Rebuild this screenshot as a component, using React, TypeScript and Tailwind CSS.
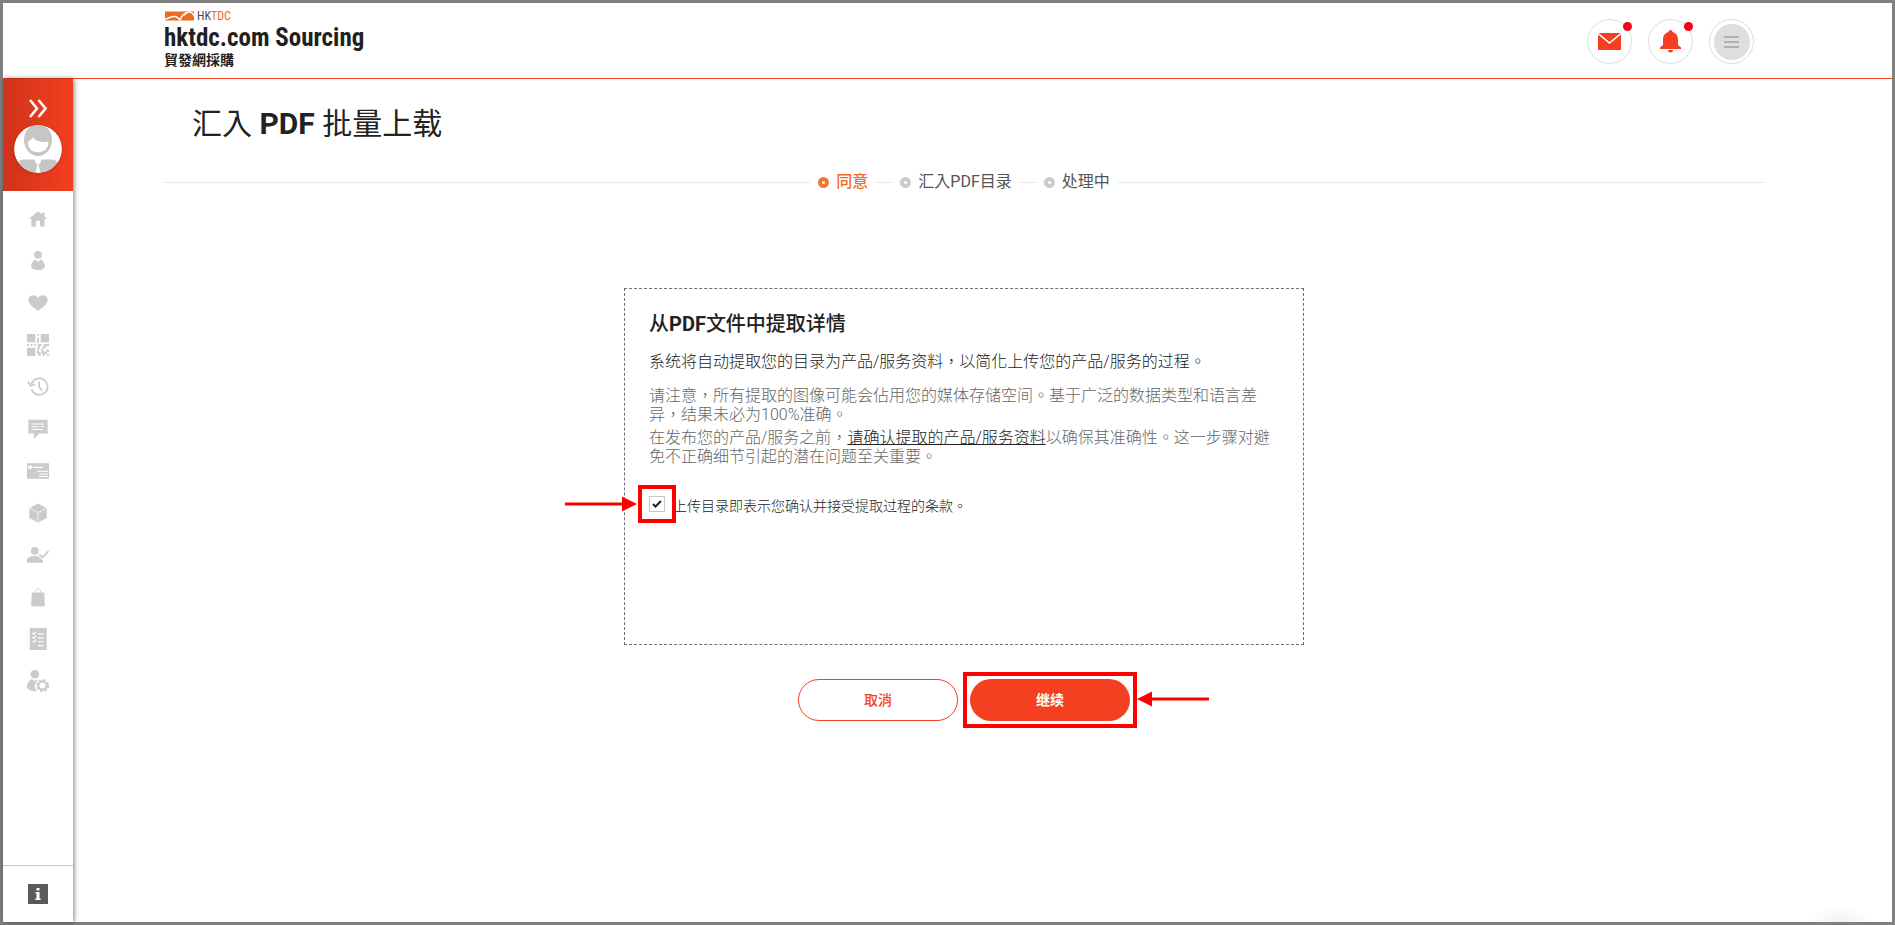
import { useState } from "react";
import type { ReactNode } from "react";
import clsx from "clsx";

interface NavItem {
  label: string;
  icon: ReactNode;
}

const navItems: NavItem[] = [
  {
    label: "主页",
    icon: (
      <path d="M12 3.5 2 12h2.8v8.2h5v-6.4h4.4v6.4h5V12H22l-3-2.6V5h-2.6v2.2z" />
    ),
  },
  {
    label: "帐户",
    icon: (
      <>
        <circle cx="12" cy="5.2" r="4.2" />
        <path d="M9 10c-2.800 2-4.500 4.600-4.500 7.500 0 2.900 3.300 4.500 7.500 4.500s7.500-1.600 7.500-4.500c0-2.900-1.700-5.500-4.500-7.500L12 13z" />
      </>
    ),
  },
  {
    label: "收藏",
    icon: (
      <path d="M12 20.800C6 16.300 1.500 13 1.500 8.800 1.500 5.500 4 3.600 6.800 3.600c2.200 0 4 1 5.200 2.900 1.200-1.900 3-2.900 5.200-2.900 2.800 0 5.300 1.900 5.300 5.200 0 4.200-4.500 7.500-10.500 12z" />
    ),
  },
  {
    label: "二维码",
    icon: (
      <path d="M0 0h9v9H0zM15 0h9v9h-9zM0 15h9v9H0zM11 0h2v2h-2zM11 4h2v6h-2zM0 11h2v2H0zM4 11h2v2H4zM8 11h2v2H8zM12 11h4v2h-2v3h-2zM18 11h6v2h-3v2h-2zM11 15h2v5h2v4h-2v-2h-2zM15 16h2v2h-2zM17 13h2v3h-2zM16 18h3v2h2v-3h3v3h-2v2h-3v2h-2v-3h-1zM22 22h2v2h-2z" />
    ),
  },
  {
    label: "历史",
    icon: (
      <>
        <path
          d="M5 14.500a9 9 0 1 0 1-8L4.800 9"
          fill="none"
          stroke="currentColor"
          strokeWidth="2"
        />
        <path d="m.5 6.500 3 5.500 6-2.500-1-1.300-4 1.400-2.700-4z" />
        <path
          d="M13.200 6v6l3.500 4"
          fill="none"
          stroke="currentColor"
          strokeWidth="2"
        />
      </>
    ),
  },
  {
    label: "讯息",
    icon: (
      <>
        <path d="M1.500 2h21v15h-9L7.500 22.500V17h-6z" />
        <path
          d="M5 6.500h14M5 9.500h8M15 9.500h4M5 12.500h12"
          stroke="#fff"
          strokeWidth="1.200"
        />
      </>
    ),
  },
  {
    label: "名片",
    icon: (
      <>
        <path d="M0 3.500h24v17H0z" />
        <circle cx="3.500" cy="8" r="2.200" fill="#fff" />
        <path
          d="M7 8h10.500M11 12.300h12M13 15.200h10M13 18h10"
          stroke="#fff"
          strokeWidth="1.200"
        />
      </>
    ),
  },
  {
    label: "产品",
    icon: (
      <>
        <path d="m12 1.500 9.500 5v11L12 22.500l-9.500-5v-11z" />
        <path
          d="m2.500 6.500 9.500 5 9.500-5M12 11.500v11"
          fill="none"
          stroke="#fff"
          strokeWidth="0.800"
        />
      </>
    ),
  },
  {
    label: "已认证买家",
    icon: (
      <>
        <circle cx="8.500" cy="7.500" r="4.200" />
        <path d="M0 20.500v-3c0-2.800 4-4.300 8.700-4.300s8.700 1.500 8.700 4.300v3z" />
        <path
          d="m13.500 11.500 3.500 3.300 6.500-7"
          fill="none"
          stroke="#fff"
          strokeWidth="4"
        />
        <path
          d="m13.500 11.500 3.500 3.300 6.500-7"
          fill="none"
          stroke="currentColor"
          strokeWidth="2"
        />
      </>
    ),
  },
  {
    label: "订单",
    icon: (
      <>
        <path d="M5.300 7h13.400l.8 15H4.500z" />
        <path
          d="M9 7.500V6c0-1.500 1.300-2.800 3-2.800s3 1.300 3 2.800v1.500"
          fill="none"
          stroke="currentColor"
          strokeWidth="1"
        />
      </>
    ),
  },
  {
    label: "清单",
    icon: (
      <>
        <path d="M3 0h18.500v24H3z" />
        <path
          d="m6 5.500 1.300 1.300L10 4.300M6 9.800l1.300 1.300L10 8.600M6 14l1.300 1.300L10 12.800M12 6.500h6M12 10.800h6M12 15h6M12 19.300h6"
          fill="none"
          stroke="#fff"
          strokeWidth="1.300"
        />
      </>
    ),
  },
  {
    label: "帐户设定",
    icon: (
      <>
        <circle cx="8.500" cy="4.700" r="4.700" />
        <path d="M5.500 9.800c-3.500 2-5.500 4.700-5.500 8C0 21 3.500 23.500 11 23.500c-1.800-1.800-2.500-3.700-2.500-6 0-2.200 1-4.200 3-5.500l-.5-2-2.500 2z" />
        <circle
          cx="17"
          cy="17"
          r="4.500"
          fill="none"
          stroke="currentColor"
          strokeWidth="2.400"
        />
        <circle
          cx="17"
          cy="17"
          r="6.200"
          fill="none"
          stroke="currentColor"
          strokeWidth="2"
          strokeDasharray="2.500 2.369"
        />
      </>
    ),
  },
];

const steps = ["同意", "汇入PDF目录", "处理中"];

function Logo() {
  return (
    <a href="#" className="flex flex-col text-[#231f20]">
      <span className="flex h-3 items-center gap-0.5">
        <svg width="31" height="10" viewBox="0 0 31 10" aria-hidden="true">
          <path d="M1 0.500h29v9H1z" fill="#e96d1f" />
          <path
            d="M0 9C5 6.500 8 4.800 11 5.500c2.500.5 3.500 2 5 3.300C18 4 21 1.500 25 1c2-.2 4 1 6 5.500"
            fill="none"
            stroke="#fff"
            strokeWidth="1.500"
          />
          <path d="M24 1.200c-2 1.500-2 2.500-4 3.300" stroke="#fff" fill="none" />
        </svg>
        <span className="font-['Roboto_Condensed',Roboto,sans-serif] text-[12px] leading-3 text-[#414a52]">
          HK<span className="text-[#e96d1f]">TDC</span>
        </span>
      </span>
      <span className="font-['Roboto_Condensed',Roboto,sans-serif] text-[25px] leading-8 font-bold">
        hktdc.com Sourcing
      </span>
      <span className="text-[14px] leading-3 font-bold">貿發網採購</span>
    </a>
  );
}

function Header() {
  return (
    <header className="flex h-[76px] items-start justify-between border-b border-[#f43f20] pt-[7px] pr-[138px] pl-[161px]">
      <Logo />
      <div className="flex gap-4 pt-[9px]">
        <button
          aria-label="讯息"
          className="relative flex size-[45px] items-center justify-center rounded-full border border-[#dcdcdc]"
        >
          <svg width="23" height="17" viewBox="0 0 23 17" aria-hidden="true">
            <path d="M0 0h23v17H0z" fill="#f43f20" />
            <path
              d="m0 .5 11.500 9.500L23 .5"
              fill="none"
              stroke="#fff"
              strokeWidth="1.600"
            />
          </svg>
          <span className="absolute top-[2px] -right-px size-[9px] rounded-full bg-[#f5001d]"></span>
        </button>
        <button
          aria-label="通知"
          className="relative flex size-[45px] items-center justify-center rounded-full border border-[#dcdcdc]"
        >
          <svg
            width="21"
            height="23"
            viewBox="0 0 21 23"
            fill="#f43f20"
            aria-hidden="true"
          >
            <path d="M10.500 0a2 2 0 0 1 2 2c3.500 1 5.500 4 5.500 7.500V15l3 2.500V19H0v-1.500L3 15V9.500C3 6 5 3 8.500 2a2 2 0 0 1 2-2zM8 20h5a2.500 2.500 0 0 1-5 0z" />
          </svg>
          <span className="absolute top-[2px] -right-px size-[9px] rounded-full bg-[#f5001d]"></span>
        </button>
        <button
          aria-label="选单"
          className="flex size-[45px] items-center justify-center rounded-full border border-[#dcdcdc]"
        >
          <span className="flex size-9 flex-col items-center justify-center gap-[3px] rounded-full bg-[#dedede]">
            <span className="h-0.5 w-[15px] bg-[#b0b0b0]"></span>
            <span className="h-0.5 w-[15px] bg-[#b0b0b0]"></span>
            <span className="h-0.5 w-[15px] bg-[#b0b0b0]"></span>
          </span>
        </button>
      </div>
    </header>
  );
}

function Sidebar() {
  return (
    <aside className="z-10 flex w-[70px] shrink-0 flex-col bg-white shadow-[1px_0_5px_rgba(0,0,0,0.5)]">
      <div className="flex h-28 flex-col items-center bg-linear-to-r from-[#cf331a] to-[#f43f20] pt-5">
        <button aria-label="展开" className="text-white">
          <svg
            width="18"
            height="19"
            viewBox="0 0 18 19"
            fill="none"
            stroke="currentColor"
            strokeWidth="2.600"
            aria-hidden="true"
          >
            <path d="m1 1 7 8.500L1 18M9.500 1l7 8.500-7 8.500" />
          </svg>
        </button>
        <svg
          className="mt-[7px] rounded-full drop-shadow"
          width="48"
          height="48"
          viewBox="0 0 48 48"
          aria-hidden="true"
        >
          <clipPath id="avatar">
            <circle cx="24" cy="24" r="24" />
          </clipPath>
          <g clipPath="url(#avatar)">
            <path d="M0 0h48v48H0z" fill="#fff" />
            <ellipse cx="24" cy="15" rx="14" ry="16" fill="#c6c6c6" />
            <path
              d="M14 16.500c2-.7 3.500-2 4.300-4.500 4 4.500 10 6 16 4.500v1.500c0 5.500-4 9.300-10.200 9.300S14 23.500 14 17.500z"
              fill="#fff"
            />
            <path
              d="M2 48v-6c1-5 4-7.500 9-7.500h9.500l1.500 4 1.500 1-2 8.500zM46 48v-6c-1-5-4-7.500-9-7.500h-9.500l-1.500 4-1.500 1 2 8.500z"
              fill="#c6c6c6"
            />
          </g>
        </svg>
      </div>
      <nav className="flex flex-col pt-[7px]">
        {navItems.map((item) => (
          <a
            key={item.label}
            href="#"
            aria-label={item.label}
            className="flex h-[42px] items-center justify-center text-[#cbcbcb]"
          >
            <svg
              width="22"
              height="22"
              viewBox="0 0 24 24"
              fill="currentColor"
              aria-hidden="true"
            >
              {item.icon}
            </svg>
          </a>
        ))}
      </nav>
      <a
        href="#"
        aria-label="资讯"
        className="mt-auto flex h-[57px] items-center justify-center border-t border-[#c8c8c8]"
      >
        <svg width="20" height="20" viewBox="0 0 20 20" aria-hidden="true">
          <path d="M0 0h20v20H0z" fill="#58595b" />
          <path
            d="M8.500 4h3v2.500h-3zM7.500 8h4v6.500h1.200V16H7.300v-1.500h1.200V9.500h-1z"
            fill="#fff"
          />
        </svg>
      </a>
    </aside>
  );
}

function Steps() {
  return (
    <ol className="flex items-center gap-2 text-base leading-6">
      <li aria-hidden="true" className="h-px flex-1 bg-[#e9e9e9]"></li>
      {steps.map((step, i) => (
        <li key={step} className="flex items-center gap-2">
          {i > 0 && <span className="h-px w-4 bg-[#e9e9e9]"></span>}
          <span
            className={clsx(
              "flex items-center gap-[7px]",
              i === 0 ? "font-medium text-[#ef6c25]" : "text-[#555555]",
            )}
          >
            <span
              className={clsx(
                "size-[11px] rounded-full border-4",
                i === 0 ? "border-[#ef7733]" : "border-[#cccccc]",
              )}
            ></span>
            {step}
          </span>
        </li>
      ))}
      <li aria-hidden="true" className="h-px flex-1 bg-[#e9e9e9]"></li>
    </ol>
  );
}

function Arrow({ className }: { className?: string }) {
  return (
    <svg
      className={clsx("pointer-events-none absolute", className)}
      width="72"
      height="16"
      viewBox="0 0 72 16"
      fill="#ff0000"
      aria-hidden="true"
    >
      <path d="M0 6.500h57V.5L72 8l-15 7.500v-6H0z" />
    </svg>
  );
}

function Agreement() {
  const [agreed, setAgreed] = useState(true);

  return (
    <section className="min-h-[357px] w-[680px] border border-dashed border-[#707070] pt-[23px] pr-[31px] pl-6 text-[#222222]">
      <h2 className="text-xl leading-6 font-bold">
        <span className="font-medium">从</span>PDF
        <span className="font-medium">文件中提取详情</span>
      </h2>
      <p className="mt-4 text-base leading-[19px] font-light">
        系统将自动提取您的目录为产品/服务资料，以简化上传您的产品/服务的过程。
      </p>
      <p className="mt-[15px] text-base leading-[19px] font-light text-[#666666]">
        请注意，所有提取的图像可能会佔用您的媒体存储空间。基于广泛的数据类型和语言差异，结果未必为100%准确。
      </p>
      <p className="mt-1 text-base leading-[19px] font-light text-[#666666]">
        在发布您的产品/服务之前，
        <span className="text-[#222222] underline">
          请确认提取的产品/服务资料
        </span>
        以确保其准确性。这一步骤对避免不正确细节引起的潜在问题至关重要。
      </p>
      <div className="mt-[30px] flex items-start gap-2">
        <span className="relative grid size-4 place-items-center">
          <input
            id="agree"
            type="checkbox"
            checked={agreed}
            onChange={(e) => setAgreed(e.target.checked)}
            className="col-start-1 row-start-1 size-4 appearance-none border border-[#c8c8c8] bg-white"
          />
          {agreed && (
            <svg
              className="pointer-events-none col-start-1 row-start-1"
              width="10"
              height="8"
              viewBox="0 0 10 8"
              fill="none"
              stroke="#222"
              strokeWidth="2"
              aria-hidden="true"
            >
              <path d="m1 4 2.500 2.500L9 1" />
            </svg>
          )}
          <span className="pointer-events-none absolute -inset-[11px] z-10 border-4 border-[#ff0000]"></span>
          <Arrow className="right-[28px]" />
        </span>
        <label htmlFor="agree" className="text-sm leading-5 font-light">
          上传目录即表示您确认并接受提取过程的条款。
        </label>
      </div>
    </section>
  );
}

export default function App() {
  return (
    <div
      lang="zh-TW"
      className="flex min-h-screen flex-col border-[3px] border-[#808080] bg-white font-[Roboto,'Noto_Sans_CJK_TC',sans-serif]"
    >
      <Header />
      <div className="flex flex-1">
        <Sidebar />
        <main className="relative flex flex-1 flex-col overflow-hidden pr-[128px] pl-[91px]">
          <h1 className="mt-[27px] pl-7 text-3xl leading-9 font-bold text-[#222222]">
            <span className="font-normal">汇入</span> PDF{" "}
            <span className="font-normal">批量上载</span>
          </h1>
          <div className="mt-7">
            <Steps />
          </div>
          <div className="mt-[94px] flex flex-col items-center">
            <Agreement />
            <div className="mt-[34px] flex gap-3 text-sm">
              <button className="h-[42px] w-40 rounded-full border border-[#f43f20] font-medium text-[#f43f20]">
                取消
              </button>
              <div className="relative">
                <button className="h-[42px] w-40 rounded-full bg-[#f43f20] font-bold text-white">
                  继续
                </button>
                <span className="pointer-events-none absolute -inset-[7px] border-4 border-[#ff0000]"></span>
                <Arrow className="top-3 left-[167px] rotate-180" />
              </div>
            </div>
          </div>
          <div className="absolute right-5 bottom-0 h-4 w-16 bg-radial-[at_50%_100%] from-black/5 to-transparent to-70%"></div>
        </main>
      </div>
    </div>
  );
}
